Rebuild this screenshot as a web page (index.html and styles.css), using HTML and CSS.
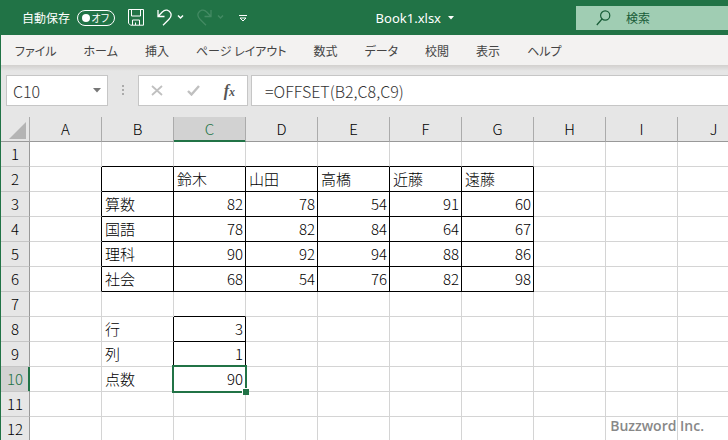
FILE: index.html
```html
<!DOCTYPE html>
<html lang="ja">

<head>
    <meta charset="UTF-8">
    <meta name="viewport" content="width=device-width, initial-scale=1.0">
    <title>Book1.xlsx</title>
    <link rel="stylesheet" href="styles.css">
</head>

<body>
    <header class="titlebar">
        <label class="autosave">
            自動保存
            <input type="checkbox" class="switch-input">
            <span class="switch"><span class="knob"></span>オフ</span>
        </label>
        <div class="quick-access">
            <button class="icon-btn save" aria-label="上書き保存">
                <svg width="16" height="17" viewBox="0 0 16 17" fill="none" stroke="currentColor">
                    <path d="M.5.5h15v15.700h-13l-2-2z M3.500.500v6.500h9v-6.500 M4.500 16v-5h7v5 M7.500 16v-2.500" />
                </svg>
            </button>
            <button class="icon-btn undo" aria-label="元に戻す">
                <svg width="27" height="18" viewBox="0 0 27 18" fill="none" stroke="currentColor">
                    <path stroke-width="1.300" d="M1 1v6.500h6.500 M1 7.500L5.500 2.800C8-.2 12.500 1 13.800 4.200C14.800 7 13.500 8.800 12 10.300L6 16.300" />
                    <path stroke-width="1.500" d="M21 6.500l2.500 2.500l2.500-2.500" />
                </svg>
            </button>
            <button class="icon-btn redo" aria-label="やり直し" disabled>
                <svg width="27" height="18" viewBox="0 0 27 18" fill="none" stroke="currentColor">
                    <path stroke-width="1.300" d="M14 1v6.500h-6.500 M14 7.500L9.500 2.800C7-.2 2.500 1 1.200 4.200C.2 7 1.500 8.800 3 10.300L9 16.300" />
                    <path stroke-width="1.500" d="M21 6.500l2.500 2.500l2.500-2.500" />
                </svg>
            </button>
            <button class="icon-btn customize" aria-label="クイック アクセス ツール バーのユーザー設定">
                <svg width="8" height="8" viewBox="0 0 8 8">
                    <path d="M0 1.500h8" stroke="currentColor" />
                    <path d="M1 4l3 3l3-3z" fill="none" stroke="currentColor" />
                </svg>
            </button>
        </div>
        <button class="book-name">
            Book1.xlsx
            <svg width="6" height="4" viewBox="0 0 6 4"><path d="M0 0h6L3 3.500z" fill="currentColor" /></svg>
        </button>
        <label class="search">
            <svg width="15" height="16" viewBox="0 0 15 16" fill="none" stroke="currentColor" stroke-width="1.200">
                <circle cx="9.200" cy="5.500" r="4.600" />
                <path d="M6 9L.8 15" />
            </svg>
            <input type="search" placeholder="検索" aria-label="検索">
        </label>
    </header>

    <nav class="tabs">
        <button>ファイル</button>
        <button>ホーム</button>
        <button>挿入</button>
        <button>ページ レイアウト</button>
        <button>数式</button>
        <button>データ</button>
        <button>校閲</button>
        <button>表示</button>
        <button>ヘルプ</button>
    </nav>

    <section class="formula-bar">
        <div class="name-box">
            <input type="text" value="C10" aria-label="名前ボックス">
            <button aria-label="名前の一覧">
                <svg width="8" height="5" viewBox="0 0 8 5"><path d="M0 0h8L4 4.500z" fill="currentColor" /></svg>
            </button>
        </div>
        <svg class="grip" width="2" height="11" viewBox="0 0 2 11">
            <path d="M0 0h2v2H0z M0 4h2v2H0z M0 8h2v2H0z" fill="currentColor" />
        </svg>
        <div class="formula-buttons">
            <button aria-label="キャンセル" disabled>
                <svg width="12" height="11" viewBox="0 0 12 11"><path d="M1 1l10 9 M11 1L1 10" stroke="currentColor" stroke-width="1.800" /></svg>
            </button>
            <button aria-label="入力" disabled>
                <svg width="13" height="11" viewBox="0 0 13 11"><path d="M1 6l3.500 3.500L12 1" fill="none" stroke="currentColor" stroke-width="2.400" /></svg>
            </button>
            <button class="fx" aria-label="関数の挿入"><i>f</i><sub>x</sub></button>
        </div>
        <input class="formula" type="text" value="=OFFSET(B2,C8,C9)" aria-label="数式バー">
    </section>

    <main class="sheet">
        <table>
            <colgroup>
                <col class="col-index">
                <col span="10" class="col-cell">
            </colgroup>
            <thead>
                <tr>
                    <th class="corner"><svg width="17" height="17" viewBox="0 0 17 17"><path d="M17 0v17H0z" fill="currentColor" /></svg></th>
                    <th>A</th><th>B</th><th class="active">C</th><th>D</th><th>E</th>
                    <th>F</th><th>G</th><th>H</th><th>I</th><th>J</th>
                </tr>
            </thead>
            <tbody>
                <tr><th>1</th><td></td><td class="line-b"></td><td class="line-b"></td><td class="line-b"></td><td class="line-b"></td><td class="line-b"></td><td class="line-b"></td><td></td><td></td><td></td></tr>
                <tr><th>2</th><td class="line-r"></td><td class="box"></td><td class="box">鈴木</td><td class="box">山田</td><td class="box">高橋</td><td class="box">近藤</td><td class="box">遠藤</td><td></td><td></td><td></td></tr>
                <tr><th>3</th><td class="line-r"></td><td class="box">算数</td><td class="box num">82</td><td class="box num">78</td><td class="box num">54</td><td class="box num">91</td><td class="box num">60</td><td></td><td></td><td></td></tr>
                <tr><th>4</th><td class="line-r"></td><td class="box">国語</td><td class="box num">78</td><td class="box num">82</td><td class="box num">84</td><td class="box num">64</td><td class="box num">67</td><td></td><td></td><td></td></tr>
                <tr><th>5</th><td class="line-r"></td><td class="box">理科</td><td class="box num">90</td><td class="box num">92</td><td class="box num">94</td><td class="box num">88</td><td class="box num">86</td><td></td><td></td><td></td></tr>
                <tr><th>6</th><td class="line-r"></td><td class="box">社会</td><td class="box num">68</td><td class="box num">54</td><td class="box num">76</td><td class="box num">82</td><td class="box num">98</td><td></td><td></td><td></td></tr>
                <tr><th>7</th><td></td><td></td><td class="line-b"></td><td></td><td></td><td></td><td></td><td></td><td></td><td></td></tr>
                <tr><th>8</th><td></td><td class="line-r">行</td><td class="box num">3</td><td></td><td></td><td></td><td></td><td></td><td></td><td></td></tr>
                <tr><th>9</th><td></td><td class="line-r">列</td><td class="box num">1</td><td></td><td></td><td></td><td></td><td></td><td></td><td></td></tr>
                <tr><th class="active">10</th><td></td><td>点数</td><td class="num selected">90</td><td></td><td></td><td></td><td></td><td></td><td></td><td></td></tr>
                <tr><th>11</th><td></td><td></td><td></td><td></td><td></td><td></td><td></td><td></td><td></td><td></td></tr>
                <tr><th>12</th><td></td><td></td><td></td><td></td><td></td><td></td><td></td><td></td><td></td><td></td></tr>
            </tbody>
        </table>
        <div class="watermark">Buzzword Inc.</div>
    </main>
</body>

</html>
```
FILE: styles.css
```css
* {
    box-sizing: border-box;
}

body {
    margin: 0;
    height: 100vh;
    display: flex;
    flex-direction: column;
    overflow: hidden;
    border-left: 1px solid #217346;
    background-color: #e6e6e6;
    font-family: "Noto Sans CJK JP", sans-serif;
    font-size: 12px;
    color: #444444;
}

button,
input {
    margin: 0;
    padding: 0;
    border: none;
    outline: none;
    background: none;
    font: inherit;
    color: inherit;
}

svg {
    display: block;
}

/* title bar */
.titlebar {
    display: flex;
    align-items: center;
    flex: none;
    height: 35px;
    padding-left: 21px;
    background-color: #217346;
    color: #ffffff;
}

.autosave {
    display: flex;
    align-items: center;
    gap: 7px;
}

.switch-input {
    position: absolute;
    opacity: 0;
}

.switch {
    display: flex;
    align-items: center;
    justify-content: space-between;
    width: 38px;
    height: 16px;
    padding: 0 5px 0 4px;
    border: 1px solid #ffffff;
    border-radius: 8px;
    font-size: 10px;
    font-feature-settings: "palt";
}

.knob {
    width: 8px;
    height: 8px;
    border-radius: 50%;
    background-color: #ffffff;
}

.quick-access {
    display: flex;
    align-items: center;
    gap: 13px;
    margin-left: 13px;
}

.icon-btn {
    flex: none;
}

.redo {
    color: #438a63;
}

.customize {
    margin-left: 2px;
}

.book-name {
    display: flex;
    align-items: center;
    gap: 7px;
    margin-left: auto;
    font-family: "Noto Sans", sans-serif;
    font-size: 13px;
}

.search {
    display: flex;
    align-items: center;
    flex: none;
    gap: 15px;
    width: 152px;
    height: 24px;
    margin-left: 122px;
    padding-left: 20px;
    background-color: #a0cdb3;
    color: #185c37;
}

.search input {
    flex: 1;
    min-width: 0;
}

.search input::placeholder {
    color: #185c37;
}

/* ribbon tabs */
.tabs {
    display: flex;
    align-items: center;
    flex: none;
    gap: 27px;
    height: 30px;
    padding-left: 14px;
    background-color: #f3f2f1;
    font-feature-settings: "palt";
    white-space: nowrap;
}

.tabs button {
    font-feature-settings: inherit;
}

/* formula bar */
.formula-bar {
    display: flex;
    align-items: center;
    flex: none;
    height: 52px;
    padding: 0 0 1px 5px;
    background: linear-gradient(#d2d0ce, #e6e6e6 6px);
}

.name-box,
.formula-buttons,
.formula {
    height: 31px;
    border: 1px solid #c6c6c6;
    background-color: #ffffff;
}

.name-box {
    display: flex;
    align-items: center;
    width: 102px;
    padding: 0 6px;
    color: #777777;
}

.name-box input {
    flex: 1;
    min-width: 0;
    font-size: 16px;
    font-weight: 300;
    color: #333333;
}

.grip {
    margin: 0 14px;
    color: #ababab;
}

.formula-buttons {
    display: flex;
    align-items: center;
    justify-content: space-between;
    width: 110px;
    padding: 0 12px;
}

.formula-buttons button {
    color: #c0c0c0;
}

.formula-buttons .fx {
    font-family: "Liberation Serif", serif;
    font-size: 16px;
    font-weight: bold;
    line-height: 16px;
    color: #555555;
}

.fx sub {
    font-size: 12px;
    font-style: italic;
    line-height: 1;
    vertical-align: baseline;
}

.formula {
    flex: 1;
    min-width: 0;
    margin-left: 3px;
    padding-left: 13px;
    border-right: none;
    font-size: 16px;
    font-weight: 300;
    color: #333333;
}

/* sheet */
.sheet {
    position: relative;
    flex: 1;
    min-height: 0;
    overflow: hidden;
    background-color: #ffffff;
}

table {
    width: 749px;
    table-layout: fixed;
    border-collapse: separate;
    border-spacing: 0;
    font-size: 15px;
    font-weight: 300;
    line-height: 24px;
    color: #000000;
}

.col-index {
    width: 29px;
}

.col-cell {
    width: 72px;
}

th,
td {
    height: 25px;
    padding: 0 3px;
    border-right: 1px solid #d4d4d4;
    border-bottom: 1px solid #d4d4d4;
    text-align: left;
    white-space: nowrap;
}

th {
    padding: 0;
    border-color: #ababab;
    background-color: #e6e6e6;
    font-size: 15px;
    font-weight: 300;
    text-align: center;
}

thead th {
    border-bottom-color: #999999;
}

tbody th {
    border-right-color: #999999;
    border-bottom-color: #c6c6c6;
}

th.active {
    background-color: #d2d2d2;
    color: #217346;
}

thead .active {
    box-shadow: inset 0 -1px #217346;
    border-bottom-color: #217346;
}

tbody .active {
    box-shadow: inset -1px 0 #217346;
    border-right-color: #217346;
}

.corner svg {
    margin: 3px 0 0 8px;
    color: #b4b4b4;
}

.num {
    padding-right: 2px;
    text-align: right;
}

.box {
    border-color: #000000;
}

.line-r {
    border-right-color: #000000;
}

.line-b {
    border-bottom-color: #000000;
}

.selected {
    position: relative;
}

/* selection frame and fill handle */
.selected::before {
    content: "";
    position: absolute;
    inset: -2px;
    border: 2px solid #217346;
}

.selected::after {
    content: "";
    position: absolute;
    right: -4px;
    bottom: -4px;
    width: 6px;
    height: 6px;
    border: 1px solid #ffffff;
    border-width: 1px 0 0 1px;
    background-color: #217346;
}

.watermark {
    position: absolute;
    right: 24px;
    bottom: 5px;
    font-family: "Open Sans", sans-serif;
    font-size: 14px;
    font-weight: 600;
    line-height: 18px;
    color: #888888;
}
```
